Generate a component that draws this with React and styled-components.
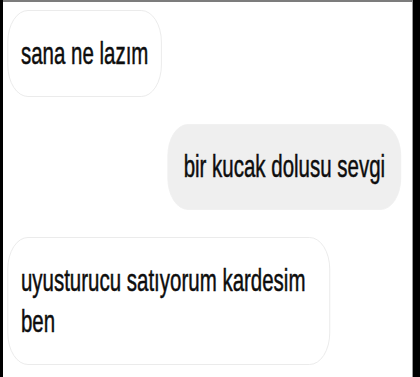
import styled, { createGlobalStyle } from "styled-components";

// the screenshot is squeezed sideways, so the thread is laid out wide and scaled
const SQUISH = 0.64;
const SCREEN_WIDTH = 410;

const GlobalStyle = createGlobalStyle`
  html, body {
    margin: 0;
    padding: 0;
    background: #000;
  }
`;

const Screen = styled.div`
  margin-left: 3px;
  width: ${SCREEN_WIDTH}px;
  height: 377px;
  box-sizing: border-box;
  background: #fff;
  border-top: 2px solid #7c7c7c;
  border-right: 1px solid #9a9a9a;
  overflow: hidden;
`;

const Thread = styled.div`
  width: ${(SCREEN_WIDTH - 1) / SQUISH}px;
  box-sizing: border-box;
  padding: 8px 17px 0 7px;
  display: flex;
  flex-direction: column;
  gap: 27px;
  transform: scaleX(${SQUISH});
  transform-origin: 0 0;
`;

const Bubble = styled.div`
  align-self: ${({ $mine }) => ($mine ? "flex-end" : "flex-start")};
  box-sizing: border-box;
  max-width: 504px;
  padding: ${({ $mine }) => ($mine ? "21px 24px 22px" : "22px 20px")};
  border-radius: 32px;
  background: ${({ $mine }) => ($mine ? "#efefef" : "#fff")};
  border: 1px solid ${({ $mine }) => ($mine ? "#efefef" : "#e6e6e6")};
  font-family: "Liberation Sans", Arial, sans-serif;
  font-size: 32px;
  line-height: 41px;
  color: #0d0d0d;
  -webkit-text-stroke: 0.5px #0d0d0d;
`;

const messages = [
  { id: 1, text: "sana ne lazım" },
  { id: 2, text: "bir kucak dolusu sevgi", mine: true },
  { id: 3, text: "uyusturucu satıyorum kardesim ben" },
];

const App = () => {
  return (
    <>
      <GlobalStyle />
      <Screen>
        <Thread>
          {messages.map((m) => (
            <Bubble key={m.id} $mine={m.mine}>
              {m.text}
            </Bubble>
          ))}
        </Thread>
      </Screen>
    </>
  );
};

export default App;
